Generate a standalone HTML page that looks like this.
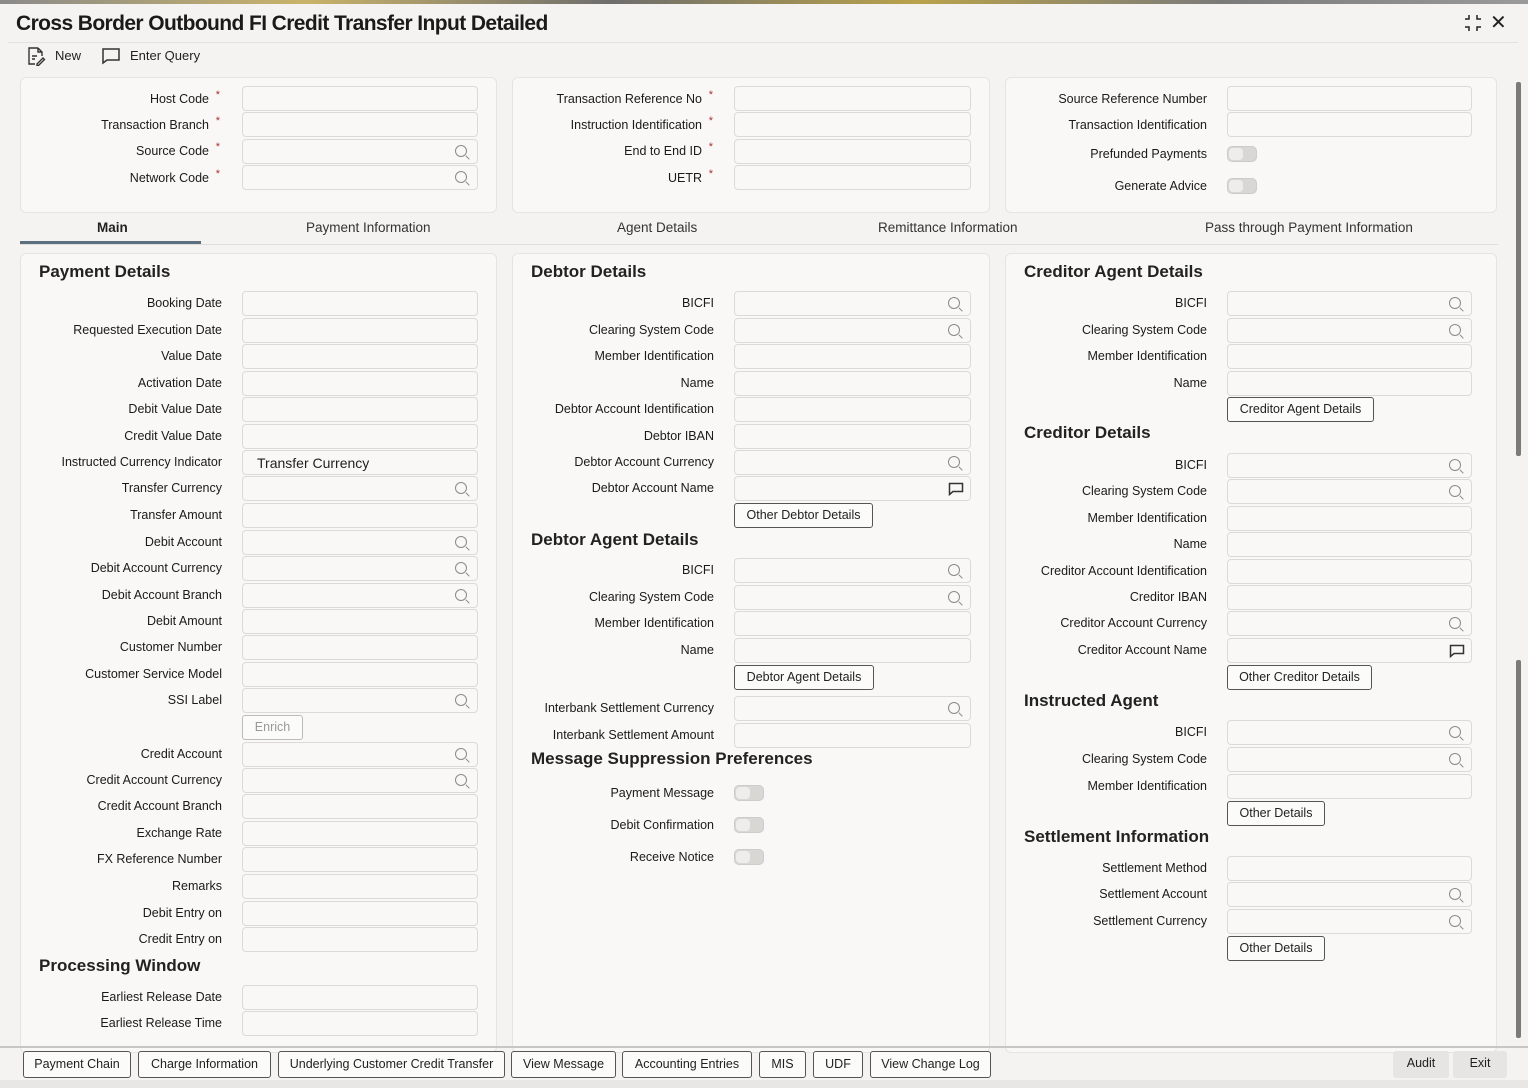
<!DOCTYPE html>
<html><head><meta charset="utf-8">
<style>
*{box-sizing:border-box;margin:0;padding:0}
body{width:1528px;height:1088px;overflow:hidden;background:#f4f3f1;font-family:"Liberation Sans",sans-serif;color:#1f1f1f;position:relative}
.topstrip{position:absolute;left:0;top:0;width:1528px;height:4px;background:linear-gradient(90deg,#8a8a8a,#c9b36a 20%,#6d6d6d 40%,#b9a24c 60%,#7a7a7a 80%,#9a9a9a)}
h1{position:absolute;left:16px;top:12px;font-size:21px;font-weight:bold;letter-spacing:-0.6px;color:#1a1a1a}
.tb{position:absolute;top:48px;font-size:13px;color:#222}
.panel{position:absolute;background:#f9f8f7;border:1px solid #e6e4e1;border-radius:6px}
.l{position:absolute;font-size:12.5px;text-align:right;color:#1a1a1a;line-height:16px;white-space:nowrap}
.l1{right:1306px}.l2{right:814px}.l3{right:321px}
.l1.req{right:1319px}.l2.req{right:826px}
.i{position:absolute;height:25px;background:#f9f8f7;border:1px solid #dcdad6;border-radius:4px}
.i1{left:242px;width:236px}.i2{left:734px;width:237px}.i3{left:1227px;width:245px}
.s::after{content:"";position:absolute;right:10px;top:5px;width:10px;height:10px;border:1.3px solid #8a8a8a;border-radius:50%}
.s::before{content:"";position:absolute;right:7px;top:17px;width:5px;height:1.3px;background:#8a8a8a;transform:rotate(45deg)}
.req::after{content:"*";color:#b03030;font-size:11px;position:absolute;right:-11px;top:-4px}
.h{position:absolute;font-size:17px;font-weight:bold;color:#222}
.b{position:absolute;height:25px;border:1px solid #555;border-radius:3px;background:#fbfbfa;font-size:12.5px;text-align:center;line-height:23px;color:#222}
.tg{position:absolute;width:30px;height:16px;border-radius:5px;background:#d9d7d4;border:1px solid #ccc}
.tg::after{content:"";position:absolute;left:1px;top:1px;width:14px;height:12px;border-radius:4px;background:#eeedeb}
.tab{position:absolute;top:220px;font-size:13.5px;color:#333}
.bb{position:absolute;top:1051px;height:27px;border:1px solid #555;border-radius:3px;background:#fbfbfa;font-size:12.5px;line-height:25px;text-align:center}
.chat svg{position:absolute;right:6px;top:5px}
</style></head><body>
<div class="topstrip"></div>
<h1>Cross Border Outbound FI Credit Transfer Input Detailed</h1>
<svg style="position:absolute;left:1463px;top:14px" width="20" height="18" viewBox="0 0 20 18" fill="none" stroke="#222" stroke-width="1.5"><path d="M2 5h4V1M18 5h-4V1M2 13h4v4M18 13h-4v4"/></svg>
<div style="position:absolute;left:1490px;top:10px;font-size:20px;color:#222">✕</div>
<div style="position:absolute;left:8px;top:42px;width:1510px;height:1px;background:#e4e2de"></div>
<svg style="position:absolute;left:26px;top:46px" width="20" height="20" viewBox="0 0 20 20" fill="none" stroke="#333" stroke-width="1.4"><path d="M12 2H3v16h6M12 2l4 4v4M12 2v4h4M6 10h5M6 13h3M11 18l6-6 1.5 1.5-6 6H11z"/></svg>
<div class="tb" style="left:55px">New</div>
<svg style="position:absolute;left:101px;top:47px" width="20" height="18" viewBox="0 0 20 18" fill="none" stroke="#333" stroke-width="1.5"><path d="M2 2h16v11H6l-4 3z"/></svg>
<div class="tb" style="left:130px">Enter Query</div>

<div class="panel" style="left:20px;top:77px;width:477px;height:136px"></div>
<div class="panel" style="left:512px;top:77px;width:478px;height:136px"></div>
<div class="panel" style="left:1005px;top:77px;width:492px;height:136px"></div>

<div class="l l1 req" style="top:91px">Host Code</div><div class="i i1" style="top:86px"></div>
<div class="l l1 req" style="top:117px">Transaction Branch</div><div class="i i1" style="top:112px"></div>
<div class="l l1 req" style="top:143px">Source Code</div><div class="i i1 s" style="top:139px"></div>
<div class="l l1 req" style="top:170px">Network Code</div><div class="i i1 s" style="top:165px"></div>

<div class="l l2 req" style="top:91px">Transaction Reference No</div><div class="i i2" style="top:86px"></div>
<div class="l l2 req" style="top:117px">Instruction Identification</div><div class="i i2" style="top:112px"></div>
<div class="l l2 req" style="top:143px">End to End ID</div><div class="i i2" style="top:139px"></div>
<div class="l l2 req" style="top:170px">UETR</div><div class="i i2" style="top:165px"></div>

<div class="l l3" style="top:91px">Source Reference Number</div><div class="i i3" style="top:86px"></div>
<div class="l l3" style="top:117px">Transaction Identification</div><div class="i i3" style="top:112px"></div>
<div class="l l3" style="top:146px">Prefunded Payments</div><div class="tg" style="left:1227px;top:146px"></div>
<div class="l l3" style="top:178px">Generate Advice</div><div class="tg" style="left:1227px;top:178px"></div>

<div class="tab" style="left:97px;color:#222;font-weight:bold">Main</div>
<div style="position:absolute;left:20px;top:241px;width:181px;height:3px;background:#5b6f80"></div>
<div style="position:absolute;left:20px;top:244px;width:1478px;height:1px;background:#e0ded9"></div>
<div class="tab" style="left:306px">Payment Information</div>
<div class="tab" style="left:617px">Agent Details</div>
<div class="tab" style="left:878px">Remittance Information</div>
<div class="tab" style="left:1205px">Pass through Payment Information</div>

<div class="panel" style="left:20px;top:253px;width:477px;height:800px"></div>
<div class="panel" style="left:512px;top:253px;width:478px;height:800px"></div>
<div class="panel" style="left:1005px;top:253px;width:492px;height:800px"></div>

<!-- Left column -->
<div class="h" style="left:39px;top:262px">Payment Details</div>
<div class="l l1" style="top:295px">Booking Date</div><div class="i i1" style="top:291px"></div>
<div class="l l1" style="top:322px">Requested Execution Date</div><div class="i i1" style="top:318px"></div>
<div class="l l1" style="top:348px">Value Date</div><div class="i i1" style="top:344px"></div>
<div class="l l1" style="top:375px">Activation Date</div><div class="i i1" style="top:371px"></div>
<div class="l l1" style="top:401px">Debit Value Date</div><div class="i i1" style="top:397px"></div>
<div class="l l1" style="top:428px">Credit Value Date</div><div class="i i1" style="top:424px"></div>
<div class="l l1" style="top:454px">Instructed Currency Indicator</div><div class="i i1" style="top:450px;font-size:14px;padding:4px 0 0 14px">Transfer Currency</div>
<div class="l l1" style="top:480px">Transfer Currency</div><div class="i i1 s" style="top:476px"></div>
<div class="l l1" style="top:507px">Transfer Amount</div><div class="i i1" style="top:503px"></div>
<div class="l l1" style="top:534px">Debit Account</div><div class="i i1 s" style="top:530px"></div>
<div class="l l1" style="top:560px">Debit Account Currency</div><div class="i i1 s" style="top:556px"></div>
<div class="l l1" style="top:587px">Debit Account Branch</div><div class="i i1 s" style="top:583px"></div>
<div class="l l1" style="top:613px">Debit Amount</div><div class="i i1" style="top:609px"></div>
<div class="l l1" style="top:639px">Customer Number</div><div class="i i1" style="top:635px"></div>
<div class="l l1" style="top:666px">Customer Service Model</div><div class="i i1" style="top:662px"></div>
<div class="l l1" style="top:692px">SSI Label</div><div class="i i1 s" style="top:688px"></div>
<div class="b" style="left:242px;top:715px;width:61px;border-color:#bbb;color:#999">Enrich</div>
<div class="l l1" style="top:746px">Credit Account</div><div class="i i1 s" style="top:742px"></div>
<div class="l l1" style="top:772px">Credit Account Currency</div><div class="i i1 s" style="top:768px"></div>
<div class="l l1" style="top:798px">Credit Account Branch</div><div class="i i1" style="top:794px"></div>
<div class="l l1" style="top:825px">Exchange Rate</div><div class="i i1" style="top:821px"></div>
<div class="l l1" style="top:851px">FX Reference Number</div><div class="i i1" style="top:847px"></div>
<div class="l l1" style="top:878px">Remarks</div><div class="i i1" style="top:874px"></div>
<div class="l l1" style="top:905px">Debit Entry on</div><div class="i i1" style="top:901px"></div>
<div class="l l1" style="top:931px">Credit Entry on</div><div class="i i1" style="top:927px"></div>
<div class="h" style="left:39px;top:956px">Processing Window</div>
<div class="l l1" style="top:989px">Earliest Release Date</div><div class="i i1" style="top:985px"></div>
<div class="l l1" style="top:1015px">Earliest Release Time</div><div class="i i1" style="top:1011px"></div>

<!-- Middle column -->
<div class="h" style="left:531px;top:262px">Debtor Details</div>
<div class="l l2" style="top:295px">BICFI</div><div class="i i2 s" style="top:291px"></div>
<div class="l l2" style="top:322px">Clearing System Code</div><div class="i i2 s" style="top:318px"></div>
<div class="l l2" style="top:348px">Member Identification</div><div class="i i2" style="top:344px"></div>
<div class="l l2" style="top:375px">Name</div><div class="i i2" style="top:371px"></div>
<div class="l l2" style="top:401px">Debtor Account Identification</div><div class="i i2" style="top:397px"></div>
<div class="l l2" style="top:428px">Debtor IBAN</div><div class="i i2" style="top:424px"></div>
<div class="l l2" style="top:454px">Debtor Account Currency</div><div class="i i2 s" style="top:450px"></div>
<div class="l l2" style="top:480px">Debtor Account Name</div><div class="i i2 chat" style="top:476px"><svg width="16" height="14" viewBox="0 0 16 14" fill="none" stroke="#333" stroke-width="1.5"><path d="M1.5 1.5h13v8H5l-3.5 3z"/></svg></div>
<div class="b" style="left:734px;top:503px;width:139px">Other Debtor Details</div>
<div class="h" style="left:531px;top:530px">Debtor Agent Details</div>
<div class="l l2" style="top:562px">BICFI</div><div class="i i2 s" style="top:558px"></div>
<div class="l l2" style="top:589px">Clearing System Code</div><div class="i i2 s" style="top:585px"></div>
<div class="l l2" style="top:615px">Member Identification</div><div class="i i2" style="top:611px"></div>
<div class="l l2" style="top:642px">Name</div><div class="i i2" style="top:638px"></div>
<div class="b" style="left:734px;top:665px;width:140px">Debtor Agent Details</div>
<div class="l l2" style="top:700px">Interbank Settlement Currency</div><div class="i i2 s" style="top:696px"></div>
<div class="l l2" style="top:727px">Interbank Settlement Amount</div><div class="i i2" style="top:723px"></div>
<div class="h" style="left:531px;top:749px">Message Suppression Preferences</div>
<div class="l l2" style="top:785px">Payment Message</div><div class="tg" style="left:734px;top:785px"></div>
<div class="l l2" style="top:817px">Debit Confirmation</div><div class="tg" style="left:734px;top:817px"></div>
<div class="l l2" style="top:849px">Receive Notice</div><div class="tg" style="left:734px;top:849px"></div>

<!-- Right column -->
<div class="h" style="left:1024px;top:262px">Creditor Agent Details</div>
<div class="l l3" style="top:295px">BICFI</div><div class="i i3 s" style="top:291px"></div>
<div class="l l3" style="top:322px">Clearing System Code</div><div class="i i3 s" style="top:318px"></div>
<div class="l l3" style="top:348px">Member Identification</div><div class="i i3" style="top:344px"></div>
<div class="l l3" style="top:375px">Name</div><div class="i i3" style="top:371px"></div>
<div class="b" style="left:1227px;top:397px;width:147px">Creditor Agent Details</div>
<div class="h" style="left:1024px;top:423px">Creditor Details</div>
<div class="l l3" style="top:457px">BICFI</div><div class="i i3 s" style="top:453px"></div>
<div class="l l3" style="top:483px">Clearing System Code</div><div class="i i3 s" style="top:479px"></div>
<div class="l l3" style="top:510px">Member Identification</div><div class="i i3" style="top:506px"></div>
<div class="l l3" style="top:536px">Name</div><div class="i i3" style="top:532px"></div>
<div class="l l3" style="top:563px">Creditor Account Identification</div><div class="i i3" style="top:559px"></div>
<div class="l l3" style="top:589px">Creditor IBAN</div><div class="i i3" style="top:585px"></div>
<div class="l l3" style="top:615px">Creditor Account Currency</div><div class="i i3 s" style="top:611px"></div>
<div class="l l3" style="top:642px">Creditor Account Name</div><div class="i i3 chat" style="top:638px"><svg width="16" height="14" viewBox="0 0 16 14" fill="none" stroke="#333" stroke-width="1.5"><path d="M1.5 1.5h13v8H5l-3.5 3z"/></svg></div>
<div class="b" style="left:1227px;top:665px;width:145px">Other Creditor Details</div>
<div class="h" style="left:1024px;top:691px">Instructed Agent</div>
<div class="l l3" style="top:724px">BICFI</div><div class="i i3 s" style="top:720px"></div>
<div class="l l3" style="top:751px">Clearing System Code</div><div class="i i3 s" style="top:747px"></div>
<div class="l l3" style="top:778px">Member Identification</div><div class="i i3" style="top:774px"></div>
<div class="b" style="left:1227px;top:801px;width:98px">Other Details</div>
<div class="h" style="left:1024px;top:827px">Settlement Information</div>
<div class="l l3" style="top:860px">Settlement Method</div><div class="i i3" style="top:856px"></div>
<div class="l l3" style="top:886px">Settlement Account</div><div class="i i3 s" style="top:882px"></div>
<div class="l l3" style="top:913px">Settlement Currency</div><div class="i i3 s" style="top:909px"></div>
<div class="b" style="left:1227px;top:936px;width:98px">Other Details</div>

<!-- scrollbar -->
<div style="position:absolute;left:1516px;top:82px;width:5px;height:374px;background:#7a7a7a;border-radius:2px"></div>
<div style="position:absolute;left:1516px;top:660px;width:5px;height:378px;background:#7a7a7a;border-radius:2px"></div>

<!-- bottom bar -->
<div style="position:absolute;left:0;top:1046px;width:1528px;height:2px;background:#c8c6c2"></div>
<div style="position:absolute;left:0;top:1080px;width:1528px;height:8px;background:#e8e7e5"></div>
<div class="bb" style="left:23px;width:108px">Payment Chain</div>
<div class="bb" style="left:138px;width:133px">Charge Information</div>
<div class="bb" style="left:278px;width:227px">Underlying Customer Credit Transfer</div>
<div class="bb" style="left:511px;width:105px">View Message</div>
<div class="bb" style="left:622px;width:130px">Accounting Entries</div>
<div class="bb" style="left:759px;width:47px">MIS</div>
<div class="bb" style="left:813px;width:50px">UDF</div>
<div class="bb" style="left:870px;width:121px">View Change Log</div>
<div class="bb" style="left:1393px;width:56px;border:none;background:#e6e5e3">Audit</div>
<div class="bb" style="left:1453px;width:54px;border:none;background:#e6e5e3">Exit</div>
</body></html>
